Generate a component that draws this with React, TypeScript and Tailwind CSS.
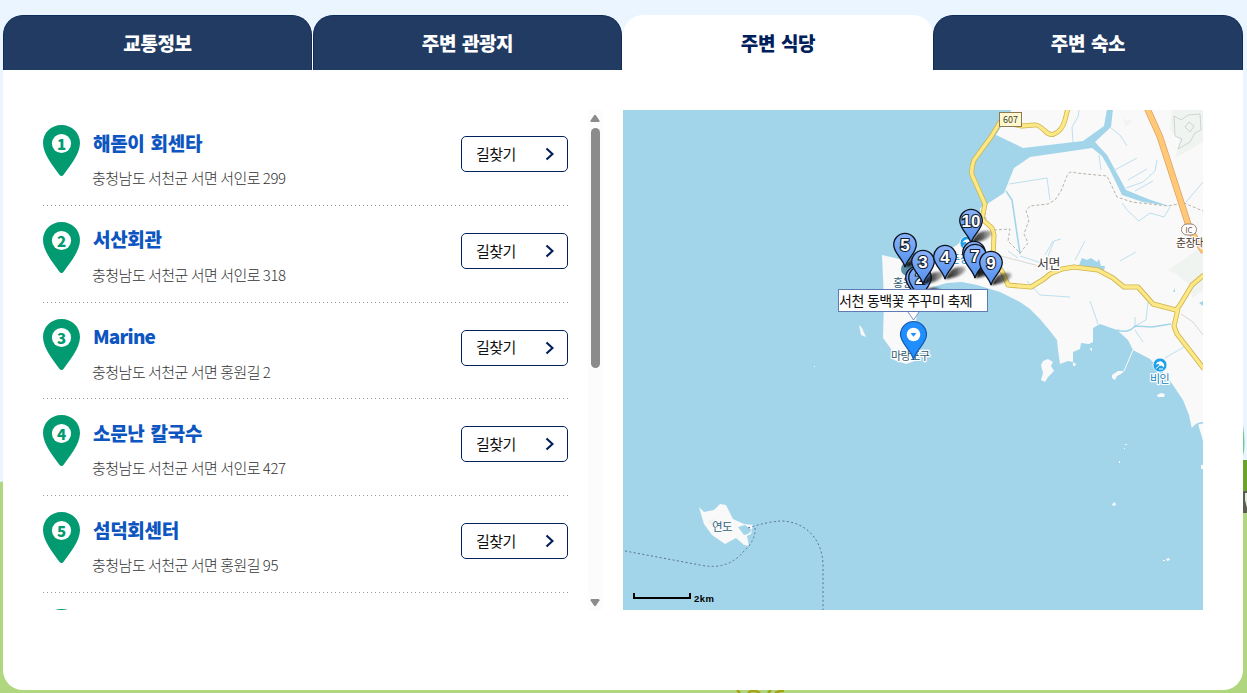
import React, { useState } from 'react'
import clsx from 'clsx'

type Place = {
    name: string
    address: string
}

type Marker = {
    label: string
    x: number
    y: number
}

const tabs = ['교통정보', '주변 관광지', '주변 식당', '주변 숙소']

const places: Place[] = [
    { name: '해돋이 회센타', address: '충청남도 서천군 서면 서인로 299' },
    { name: '서산회관', address: '충청남도 서천군 서면 서인로 318' },
    { name: 'Marine', address: '충청남도 서천군 서면 홍원길 2' },
    { name: '소문난 칼국수', address: '충청남도 서천군 서면 서인로 427' },
    { name: '섬덕회센터', address: '충청남도 서천군 서면 홍원길 95' },
    { name: '', address: '' },
]

// x / y is the tip of the pin
const markers: Marker[] = [
    { label: '', x: 917, y: 300 },
    { label: '2', x: 920, y: 300 },
    { label: '10', x: 971, y: 243 },
    { label: '5', x: 905, y: 267 },
    { label: '3', x: 923, y: 284 },
    { label: '4', x: 945, y: 279 },
    { label: '', x: 974, y: 275 },
    { label: '7', x: 975, y: 278 },
    { label: '9', x: 991, y: 285 },
]

const yellowRoads = [
    'M1068 108L1065 120Q1062 131 1054 134Q1050 136 1045 131Q1038 124 1034 125L1022 126L1000 122L991 137L974 160Q971 168 972 175L985 204L982 219L992 228L994 235L993 258L1003 273L1008 285L1031 287L1044 279L1050 274L1062 269L1074 267L1098 270L1113 278L1124 287L1138 287L1153 304L1176 310L1180 305L1192 285L1204 275',
    'M1178 309L1174 326L1177 334L1204 369',
]

const ListPin = ({ number }: { number: number }) => (
    <svg width="38" height="52" viewBox="0 0 38 52" className="shrink-0">
        <path
            d="M18.5 0C8 0 0 7.8 0 18C0 29.5 11 42 16.2 49.5Q18.5 52.5 20.8 49.5C26 42 37 29.5 37 18C37 7.8 29 0 18.5 0Z"
            fill="#029a70"
        />
        <circle cx="18.5" cy="18.5" r="9.6" fill="#fff" />
        <text
            x="18.5"
            y="24.5"
            textAnchor="middle"
            fontSize="15"
            fontWeight="900"
            fontFamily="Noto Sans CJK KR, sans-serif"
            fill="#029a70"
        >
            {number}
        </text>
    </svg>
)

const PlaceRow = ({ place, number }: { place: Place; number: number }) => (
    <li className="flex h-[96.75px] shrink-0 flex-col">
        <div className="flex flex-1 items-start pt-[16px]">
            <ListPin number={number} />
            {place.name && (
                <>
                    <div className="ml-[11px] flex-1 whitespace-nowrap">
                        <p
                            className={clsx(
                                'mt-[3.5px] pl-px text-[19px] leading-7 font-black text-[#0d55c0] [word-spacing:2px]',
                                place.name === 'Marine' ? 'tracking-[-0.8px]' : 'tracking-[-0.3px]'
                            )}
                        >
                            {place.name}
                        </p>
                        <p className="mt-[9.5px] text-[15px] leading-6 font-light tracking-[-0.5px] text-[#333]">
                            {place.address}
                        </p>
                    </div>
                    <button className="mt-[11px] flex h-9 w-[107px] items-center justify-between rounded-[5px] border border-[#00205b] pr-[13px] pl-[14px] text-[15px] tracking-[-0.6px] text-[#111]">
                        길찾기
                        <svg width="9" height="14" viewBox="0 0 9 14">
                            <path
                                d="M1.5 1.5L7.5 7L1.5 12.5"
                                fill="none"
                                stroke="#00205b"
                                strokeWidth="2.2"
                            />
                        </svg>
                    </button>
                </>
            )}
        </div>
        <div className="h-px bg-[repeating-linear-gradient(to_right,#999_0_1px,transparent_1px_4px)]" />
    </li>
)

const ScrollBar = () => (
    <div className="flex h-[500px] w-[14px] flex-col items-center bg-[#fcfcfc]">
        <svg width="10" height="8" viewBox="0 0 10 8" className="mt-[4px]">
            <path d="M5 0.8Q5.5 0.8 6 1.5L9.5 6.5Q9.8 8 8.5 8H1.5Q0.2 8 0.5 6.5L4 1.5Q4.5 0.8 5 0.8Z" fill="#8b8b8b" />
        </svg>
        <div className="mt-[6px] ml-px h-[240px] w-[9px] rounded-full bg-[#8b8b8b]" />
        <svg width="10" height="8" viewBox="0 0 10 8" className="mt-auto mb-[3px]">
            <path d="M5 7.2Q5.5 7.2 6 6.5L9.5 1.5Q9.8 0 8.5 0H1.5Q0.2 0 0.5 1.5L4 6.5Q4.5 7.2 5 7.2Z" fill="#8b8b8b" />
        </svg>
    </div>
)

const MapPin = ({ marker }: { marker: Marker }) => (
    <g transform={`translate(${marker.x} ${marker.y})`}>
        <path
            d="M0 0L6 -9Q12 -13 19 -12Q24 -9 15 -4Q9 -1 0 0Z"
            fill="url(#shadow)"
            filter="url(#soften)"
        />
        <path
            d="M0 0C-2 -8 -11.3 -14 -11.3 -22.3A11.3 11.3 0 0 1 11.3 -22.3C11.3 -14 2 -8 0 0Z"
            fill="url(#pin)"
            stroke="#0b1220"
            strokeWidth="1.3"
        />
        <text
            x="0"
            y="-16"
            textAnchor="middle"
            fontSize="17"
            fontWeight="700"
            fontFamily="Liberation Sans, sans-serif"
            fill="#fff"
            stroke="#14202f"
            strokeWidth="2.2"
            paintOrder="stroke"
        >
            {marker.label}
        </text>
    </g>
)

const BeachIcon = ({ x, y }: { x: number; y: number }) => (
    <g transform={`translate(${x} ${y})`}>
        <circle r="7" fill="#1d9fea" stroke="#fff" strokeWidth="0.8" />
        <path d="M-4.5 -0.5Q-2 -4.5 1.5 -3.5Q5 -1.5 4 2.5L1.5 0.5L0 1L-1 -1Z" fill="#fff" />
        <path d="M0 0L-4 3.5M-1 4H3" stroke="#fff" strokeWidth="1" />
    </g>
)

const AreaMap = () => (
    <div className="relative h-[500px] w-[580px] overflow-hidden bg-[#a2d5ea]">
        <svg
            width="580"
            height="500"
            viewBox="623 110 580 500"
            fontFamily="Noto Sans CJK KR, sans-serif"
        >
            <defs>
                <linearGradient id="pin" x1="0" y1="0" x2="0" y2="1">
                    <stop offset="0" stopColor="#8ab2f8" />
                    <stop offset="1" stopColor="#5290ee" />
                </linearGradient>
                <linearGradient id="shadow" x1="0" y1="0" x2="1" y2="0">
                    <stop offset="0" stopColor="#000" stopOpacity="0.95" />
                    <stop offset="0.5" stopColor="#111" stopOpacity="0.7" />
                    <stop offset="1" stopColor="#333" stopOpacity="0.3" />
                </linearGradient>
                <filter id="soften" x="-0.2" y="-0.3" width="1.4" height="1.6">
                    <feGaussianBlur stdDeviation="0.8" />
                </filter>
            </defs>

            {/* land */}
            <g fill="#f9f9f9">
                <path d="M1012 109H1204V444L1198 424L1192 429L1189 415L1183 400L1173 385L1163 372L1150 359L1133 350L1128 340L1117 330L1100 324L1093 328V342L1089 344L1081 343L1080 349L1073 352V362L1068 361L1060 364L1058 350L1057 340L1050 331L1040 319L1030 309L1020 302L1000 292L977 285L962 282L947 283L933 287L922 298L917 313L915 330L918 348L918 360L906 364L894 360L891 349L883 338L884 300L882 255L895 258L910 262L925 261L942 254L957 245L968 235L981 223L980 208L988 204L996 135Z" />
                <path d="M699 507L704 512L714 510L720 504L726 505L733 519L744 524L753 525L751 534L747 536L749 546L744 545L736 538L725 544L712 535L704 524L701 514Z" />
                <path d="M1043 361L1048 359L1053 362L1051 366L1054 371L1048 377L1045 382L1041 380L1043 373L1041 365Z" />
                <path d="M1112 375L1118 371L1124 371L1121 374L1117 376L1115 380L1112 378Z" />
                <path d="M1157 395L1161 393L1165 394L1164 397L1158 397Z" />
                <path d="M859 325L862 328L866 337L861 335Z" />
                <path d="M1112 504L1115 502L1116 505L1113 506Z" />
                <path d="M1166 559L1169 558L1170 560L1167 561Z" />
                <path d="M1125 444h2v1h-2zM1124 448h1v1h-1zM1119 461h1v2h-1zM1163 560h2v1h-2zM1201 465h2v4h-2zM1090 348l2 0l0 3l-1 0zM1073 362l3 2l-1 2h-2zM814 366h1v1h-1z" />
            </g>
            <path d="M1133 350L1124 371" stroke="#f9f9f9" strokeWidth="1" />
            <g fill="#eff4f0">
                <path d="M1172 110H1203V141L1190 150L1175 158L1180 140L1170 130Z" />
                <path d="M1190 255L1203 245V290L1192 298L1190 285L1178 275L1168 270Z" />
                <path d="M1123 118l4 3l6-2l-7 8zM708 520l6-1l5 4l-8 3z" />
            </g>

            {/* rivers and reservoirs */}
            <path d="M994 134L1023 148L1083 141L1104 126L1107 109H1113L1111 127L1095 142L1107 155L1126 190L1148 199L1169 206L1143 202L1122 195L1110 170L1102 156L1092 148L1030 157L1014 168L1004 193L984 206L973 180L975 160Z" fill="#a2d5ea" />
            <path d="M1079 265L1082 258L1087 260L1091 258L1097 262L1099 259L1101 266L1105 266L1104 271Z" fill="#a2d5ea" />
            <path d="M738 527l7-2l7 5l-4 4l-4 1zM1173 292l2-4v4zM1199 303l4-2v5z" fill="#a2d5ea" />
            <path d="M1192 429Q1198 422 1203 423" fill="none" stroke="#a2d5ea" strokeWidth="1.6" />
            <path d="M1006 191L1012 200L1020 254" fill="none" stroke="#a2d5ea" strokeWidth="1.6" />
            <g fill="none" stroke="#b5dded" strokeWidth="0.9">
                <path d="M1079 110L1078 117L1072 127L1073 142M1111 128L1120 135L1127 146M1099 155L1101 170M1009 184L1047 178L1050 200M1126 188L1143 182L1155 171L1157 160M1113 171L1137 158M1128 180L1147 169M1135 191L1153 181M1122 203L1128 211L1139 221L1150 213L1164 217L1170 207M1186 202L1203 182" />
                <path d="M1020 256L1045 264M1008 251L1018 258M1045 264L1054 241L1061 239M1045 255L1053 241M1075 260L1085 241M1120 261L1136 252M1027 281L1040 295L1070 297M1090 301L1098 324M1135 317V328M1148 302L1146 320L1135 326M1135 330L1143 342M1165 358L1184 347" />
            </g>
            <path d="M1117 330Q1128 334 1135 326L1152 327L1171 324" fill="none" stroke="#a2d5ea" strokeWidth="1.4" />

            {/* administrative borders */}
            <g fill="none" stroke="#b8b4a6" strokeWidth="1" strokeDasharray="3 2">
                <path d="M994 230L1010 229L1008 241L1020 253L1028 243L1024 234L1029 220L1026 211L1030 206L1048 204L1055 200L1061 191L1067 176Q1069 170 1076 173L1107 176L1117 197L1132 202L1168 206L1184 203L1203 211" />
                <path d="M984 207L986 220" />
            </g>
            <path d="M1174 116L1181 120L1188 115L1200 114L1201 130L1195 133L1190 142L1178 149L1182 139L1175 136ZM1185 127L1189 122L1194 126L1190 132Z" fill="none" stroke="#c5ccc5" strokeWidth="0.8" />
            <path d="M1001 256L1058 271M1181 314L1193 322L1203 335" fill="none" stroke="#d8d8d8" strokeWidth="1" />

            {/* roads */}
            {yellowRoads.map((d) => (
                <path key={d} d={d} fill="none" stroke="#cfb44c" strokeWidth="5" strokeLinejoin="round" />
            ))}
            {yellowRoads.map((d) => (
                <path key={d} d={d} fill="none" stroke="#fce886" strokeWidth="3.4" strokeLinejoin="round" />
            ))}
            <path d="M1147 108L1160 137L1183 208L1190 230L1204 252" fill="none" stroke="#e3a265" strokeWidth="6.6" />
            <path d="M1147 108L1160 137L1183 208L1190 230L1204 252" fill="none" stroke="#ffc978" strokeWidth="5" />

            {/* ferry route */}
            <path
                d="M625 551L700 565Q728 571 744 551Q756 540 755 528M748 528Q766 522 780 521C806 521 823 540 823 566V610"
                fill="none"
                stroke="#5a6f9a"
                strokeWidth="1"
                strokeDasharray="2 2.4"
            />

            <rect x="999.5" y="112.5" width="22" height="14" fill="#fdf8d0" stroke="#8d7a50" />
            <text x="1010.5" y="123" textAnchor="middle" fontSize="9" fill="#3c3c2c">607</text>
            <rect x="1181.5" y="224" width="15" height="11" rx="5.5" fill="#fff" stroke="#9a8174" />
            <text x="1189" y="232.5" textAnchor="middle" fontSize="8" fill="#73594e">IC</text>

            <BeachIcon x={1160} y={365} />
            <BeachIcon x={967} y={243} />
            <circle cx="908" cy="269" r="7" fill="#5d8fa8" />

            <g stroke="#fff" strokeWidth="2.4" paintOrder="stroke" strokeLinejoin="round">
                <text x="1037" y="268" fontSize="13" fill="#444" letterSpacing="-0.5">서면</text>
                <text x="1176" y="247" fontSize="11" fill="#4d382c" letterSpacing="-0.6">춘장대</text>
                <text x="1150" y="383" fontSize="11" fill="#1583bd" letterSpacing="-0.5">비인</text>
                <text x="891" y="360" fontSize="11" fill="#305a70" letterSpacing="-0.5">마랑포구</text>
                <text x="893" y="287" fontSize="11" fill="#305a70">홍원</text>
                <text x="950" y="263" fontSize="11" fill="#1583bd">춘장</text>
            </g>
            <text x="712" y="531" fontSize="11.5" fill="#30667e" letterSpacing="-0.5">연도</text>

            {markers.map((marker, index) => (
                <MapPin key={index} marker={marker} />
            ))}

            <path
                d="M913.5 360C912 350 900.5 344 900.5 334.5A13 13 0 0 1 926.5 334.5C926.5 344 915 350 913.5 360Z"
                fill="#218eff"
                stroke="#1559a8"
                strokeWidth="1.2"
            />
            <path d="M908 312L913.5 320L919 312" fill="#fff" stroke="#5b78b4" strokeWidth="0.8" />
            <circle cx="913.5" cy="334.5" r="6.8" fill="#fff" />
            <path d="M910.5 333H916.5L913.5 336.8Z" fill="#218eff" />

            <path d="M634 593V598H690V593" fill="none" stroke="#000" strokeWidth="2" />
            <text x="694" y="602" fontSize="9.5" fontWeight="700" textLength="20" fontFamily="Liberation Sans, sans-serif">2km</text>
        </svg>
        <div className="absolute top-[179px] left-[215px] h-[23px] w-[150px] border border-[#5f7bb5] bg-white text-[14px] leading-[20px] tracking-[-0.5px] whitespace-nowrap text-[#111]">
            <span className="[word-spacing:0.5px]">서천 동백꽃 주꾸미 축제</span>
        </div>
    </div>
)

// grass, tree edge and weeds showing around the card
const Scenery = () => (
    <svg width="1247" height="693" viewBox="0 0 1247 693" className="absolute inset-0">
        <path d="M0 482L6 481V500H1240V511H1247V693H0Z" fill="#b0d780" />
        <path d="M1243 425Q1246 445 1243 456Z" fill="#6ccb90" />
        <path d="M1243 460H1247V491H1243Z" fill="#69a52b" />
        <path d="M1243 491H1247V513H1243Z" fill="#5b5c52" />
        <path d="M1245 493H1247V508L1245 500Z" fill="#e5eddc" />
        <path d="M737 690L740 693M748 693L751 691L756 691L760 693M768 693L771 690M775 693L780 691L784 691" stroke="#a5a416" strokeWidth="2.5" fill="none" />
    </svg>
)

const App: React.FC = () => {
    const [activeTab, setActiveTab] = useState(2)

    return (
        <div className="relative h-[693px] w-[1247px] overflow-hidden bg-[#ebf5ff] font-['Noto_Sans_CJK_KR',sans-serif]">
            <Scenery />
            <div className="relative ml-[3px] w-[1240px] pt-[15px]">
                <div className="grid h-[55px] grid-cols-4">
                    {tabs.map((tab, index) => (
                        <button
                            key={tab}
                            onClick={() => setActiveTab(index)}
                            className={clsx(
                                'rounded-t-[20px] border-x border-t text-[19px] font-black tracking-[-0.4px] [word-spacing:2px]',
                                index === activeTab
                                    ? 'border-white bg-white text-[#00205b]'
                                    : 'border-[#0f2b59] bg-[#223b62] text-white',
                                index < activeTab && 'mr-px shadow-[1px_0_0_#fff]'
                            )}
                        >
                            {tab}
                        </button>
                    ))}
                </div>
                <div className="flex h-[620px] rounded-b-[20px] bg-white pt-10 pl-10">
                    <div className="h-[500px] w-[525px] overflow-hidden">
                        <ul className="-mt-px flex flex-col">
                            {places.map((place, index) => (
                                <PlaceRow key={index} place={place} number={index + 1} />
                            ))}
                        </ul>
                    </div>
                    <div className="ml-[20px]">
                        <ScrollBar />
                    </div>
                    <div className="ml-[21px]">
                        <AreaMap />
                    </div>
                </div>
            </div>
        </div>
    )
}

export default App
